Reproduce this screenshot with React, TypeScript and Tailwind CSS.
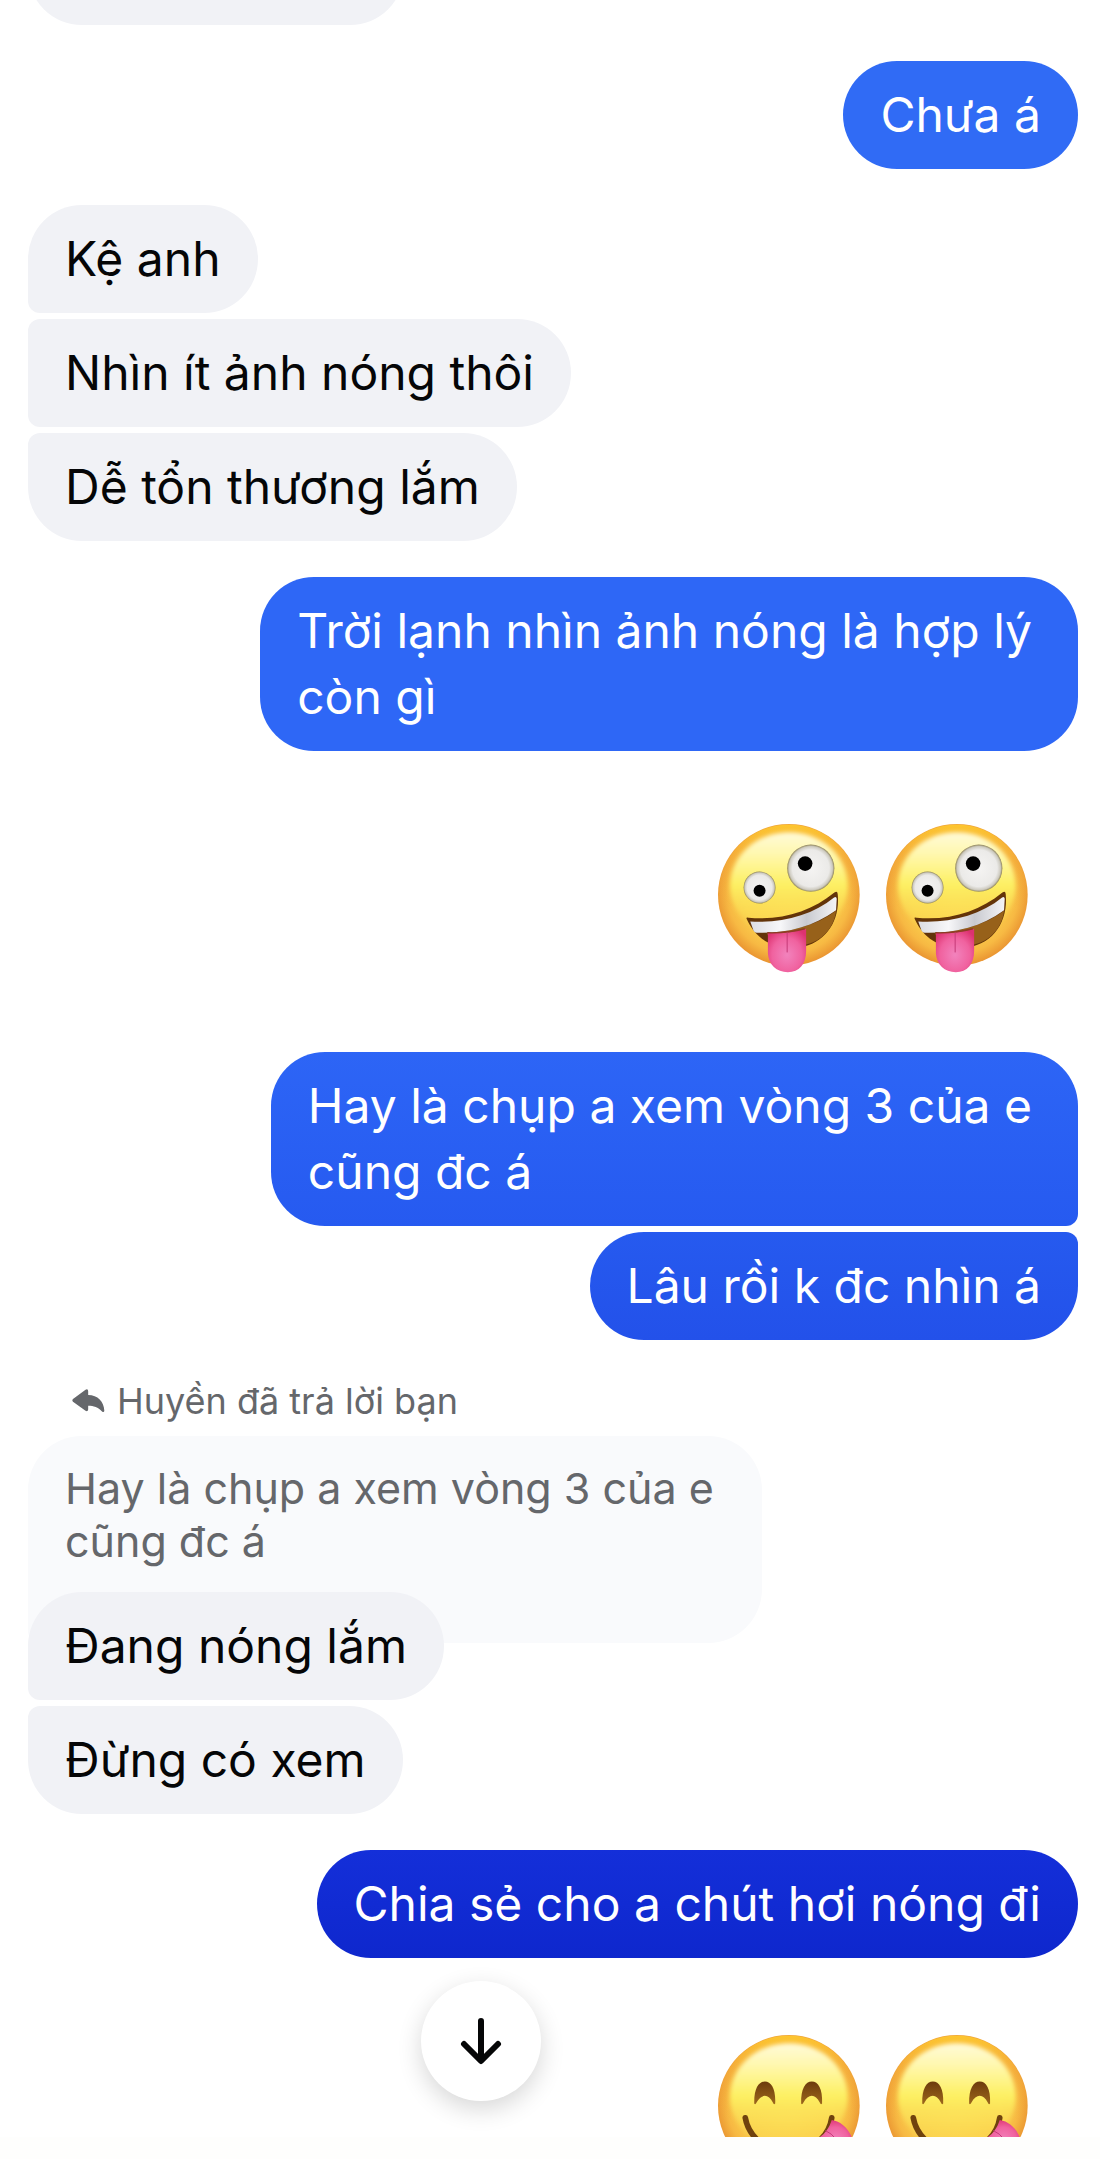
import { clsx } from 'clsx';
import type { ReactNode } from 'react';

interface Message {
    lines: string[];
    tone?: string;
    shape?: 'single' | 'first' | 'middle' | 'last';
}

interface BubbleProps {
    message: Message;
    mine?: boolean;
}

const THEIR_SHAPES = {
    single: 'rounded-[54px]',
    first: 'rounded-[54px] rounded-bl-xl',
    middle: 'rounded-[54px] rounded-l-xl',
    last: 'rounded-[54px] rounded-tl-xl',
};

const MY_SHAPES = {
    single: 'rounded-[54px]',
    first: 'rounded-[54px] rounded-br-xl',
    middle: 'rounded-[54px] rounded-r-xl',
    last: 'rounded-[54px] rounded-tr-xl',
};

function Bubble({ message, mine = false }: BubbleProps) {
    const { lines, tone, shape = 'single' } = message;

    return (
        <p
            className={clsx(
                'relative py-[21px] pl-[37px] text-[48px] leading-[66px]',
                lines.length > 1 ? 'pr-[46px]' : 'pr-[37px]',
                mine ? clsx('text-white', tone, MY_SHAPES[shape]) : clsx('bg-[#f1f2f6] text-[#050607]', THEIR_SHAPES[shape])
            )}
        >
            {lines.map((line) => (
                <span key={line} className="block">{line}</span>
            ))}
        </p>
    );
}

function Group({ mine = false, children }: { mine?: boolean; children: ReactNode }) {
    return (
        <div className={clsx('flex flex-col gap-[6px]', mine ? 'items-end' : 'items-start')}>
            {children}
        </div>
    );
}

// Shared gradients for both emoji faces
function EmojiDefs() {
    return (
        <svg className="absolute size-0" aria-hidden="true">
            <defs>
                <radialGradient id="face" cx="0.5" cy="0.48" r="0.53">
                    <stop offset="0" stopColor="#fddf58" />
                    <stop offset="0.6" stopColor="#fbd04d" />
                    <stop offset="0.82" stopColor="#f7b943" />
                    <stop offset="1" stopColor="#e8902f" />
                </radialGradient>
                <linearGradient id="shine" x1="0" y1="0" x2="0" y2="1">
                    <stop offset="0" stopColor="#fffad8" />
                    <stop offset="0.2" stopColor="#fff8b0" />
                    <stop offset="0.5" stopColor="#fdf062" />
                    <stop offset="0.75" stopColor="#fce057" stopOpacity="0.6" />
                    <stop offset="1" stopColor="#fbd24e" stopOpacity="0" />
                </linearGradient>
                <linearGradient id="rim" x1="0" y1="0" x2="0" y2="1">
                    <stop offset="0" stopColor="#fdc62e" />
                    <stop offset="0.25" stopColor="#f6b03a" stopOpacity="0.5" />
                    <stop offset="0.6" stopColor="#f0a038" stopOpacity="0" />
                </linearGradient>
                <radialGradient id="eyeball">
                    <stop offset="0" stopColor="#f5f4f3" />
                    <stop offset="0.78" stopColor="#ebeae8" />
                    <stop offset="0.92" stopColor="#cdcac0" />
                    <stop offset="1" stopColor="#8f8458" />
                </radialGradient>
                <linearGradient id="teeth" x1="0" y1="0" x2="1" y2="0">
                    <stop offset="0" stopColor="#dcdde2" />
                    <stop offset="0.35" stopColor="#f7f7f9" />
                    <stop offset="0.65" stopColor="#c9cad0" />
                    <stop offset="1" stopColor="#f4f4f6" />
                </linearGradient>
                <radialGradient id="tongue" cx="0.5" cy="0.6" r="0.65">
                    <stop offset="0" stopColor="#f283bd" />
                    <stop offset="0.6" stopColor="#f0629f" />
                    <stop offset="1" stopColor="#dd3270" />
                </radialGradient>
                <linearGradient id="brown" x1="0" y1="0" x2="0" y2="1">
                    <stop offset="0" stopColor="#6d3b0c" />
                    <stop offset="1" stopColor="#9c671c" />
                </linearGradient>
                <filter id="soften" x="-0.1" y="-0.1" width="1.2" height="1.2">
                    <feGaussianBlur stdDeviation="7" />
                </filter>
            </defs>
        </svg>
    );
}

function ZanyFace() {
    return (
        <svg viewBox="24 27 427 459" className="w-[142px]" role="img" aria-label="zany face">
            <circle cx="237" cy="240" r="213" fill="url(#face)" />
            <circle cx="237" cy="240" r="211" fill="url(#rim)" />
            <path d="M237 52C332 52 414 120 414 216C414 300 330 370 237 370S60 300 60 216C60 120 142 52 237 52Z" fill="url(#shine)" filter="url(#soften)" />
            <circle cx="149" cy="218" r="48" fill="url(#eyeball)" />
            <circle cx="149" cy="228" r="18" />
            <circle cx="303" cy="160" r="71" fill="url(#eyeball)" />
            <circle cx="286" cy="146" r="22" />
            <path d="M110 312Q108 306 116 309C216 318 304 290 374 233Q384 226 384 238C392 318 348 386 270 398C194 405 140 378 110 312Z" fill="#633409" />
            <path d="M170 356C244 350 322 332 379 288C372 344 330 388 270 392C228 394 192 382 170 356Z" fill="#97611a" />
            <path d="M121 320C212 326 308 302 373 248Q380 244 381 252L379 286C308 338 226 356 140 354Q134 354 131 348Z" fill="url(#teeth)" />
            <path d="M174 354Q232 358 289 342V410C289 448 268 473 234 473S176 450 174 416Z" fill="url(#tongue)" />
            <path d="M172 354Q232 356 285 342" fill="none" stroke="#8e3b25" strokeWidth="4" />
            <path d="M232 354V412" stroke="#c53a77" strokeWidth="3" strokeLinecap="round" />
        </svg>
    );
}

function YumFace() {
    return (
        <svg viewBox="24 32 427 459" className="w-[142px]" role="img" aria-label="face savoring food">
            <circle cx="237" cy="257" r="213" fill="url(#face)" />
            <circle cx="237" cy="257" r="211" fill="url(#rim)" />
            <path d="M237 69C332 69 414 137 414 233C414 317 330 387 237 387S60 317 60 233C60 137 142 69 237 69Z" fill="url(#shine)" filter="url(#soften)" />
            <path d="M133 250C132 206 146 184 165 184S198 206 196 250Q192 255 189 247C182 234 174 227 165 227S147 234 140 247Q136 255 133 250Z" fill="url(#brown)" />
            <path d="M274 250C273 206 287 184 306 184S339 206 337 250Q333 255 330 247C323 234 315 227 306 227S288 234 281 247Q277 255 274 250Z" fill="url(#brown)" />
            <path d="M106 293C116 350 172 398 237 398S358 350 366 293" fill="none" stroke="#70420e" strokeWidth="17" strokeLinecap="round" />
            <path d="M366 300C392 304 412 322 424 346C434 384 414 404 390 400C364 396 340 376 328 352C346 342 358 324 366 300Z" fill="url(#tongue)" />
            <path d="M348 332Q366 340 378 356" fill="none" stroke="#c53a77" strokeWidth="3" strokeLinecap="round" />
        </svg>
    );
}

function EmojiRow({ children }: { children: ReactNode }) {
    return <div className="flex justify-end gap-[26px] pt-[37px] pr-[50px] pb-[39px]">{children}</div>;
}

function ReplyLabel({ children }: { children: ReactNode }) {
    return (
        <p className="mb-2 flex items-center gap-3 pt-1 pl-11 text-[36px] leading-[42px] text-[#65676b]">
            <svg viewBox="64 56 100 70" className="w-[33px]" fill="currentColor" aria-hidden="true">
                <path d="M67 86L105 58Q113 54 113 63V74C142 74 161 94 162 122Q161 128 155 124C143 112 130 107 113 107V118Q112 126 105 122L67 95Q63 90 67 86Z" />
            </svg>
            {children}
        </p>
    );
}

function QuotedMessage({ lines }: { lines: string[] }) {
    return (
        <blockquote className="-mb-[57px] rounded-[54px] rounded-bl-xl bg-[#f9fafc] pt-[26px] pr-12 pb-[75px] pl-[37px] text-[43px] leading-[53px] text-[#65676b]">
            {lines.map((line) => (
                <span key={line} className="block">{line}</span>
            ))}
        </blockquote>
    );
}

export default function App() {
    return (
        <main className="flex h-screen flex-col bg-white font-['Inter','Noto_Sans',sans-serif]">
            <EmojiDefs />

            <section className="relative min-h-0 flex-1 overflow-hidden">
                <div className="flex flex-col gap-9 pr-[22px] pl-7">
                    {/* Older message, mostly scrolled out of view */}
                    <div className="-mt-[83px] h-[108px] w-[376px] rounded-[54px] bg-[#f1f2f6]" />

                    <Group mine>
                        <Bubble mine message={{ lines: ['Chưa á'], tone: 'bg-[#306bf5]' }} />
                    </Group>

                    <Group>
                        <Bubble message={{ lines: ['Kệ anh'], shape: 'first' }} />
                        <Bubble message={{ lines: ['Nhìn ít ảnh nóng thôi'], shape: 'middle' }} />
                        <Bubble message={{ lines: ['Dễ tổn thương lắm'], shape: 'last' }} />
                    </Group>

                    <Group mine>
                        <Bubble mine message={{ lines: ['Trời lạnh nhìn ảnh nóng là hợp lý', 'còn gì'], tone: 'bg-[#2e67f6]' }} />
                    </Group>

                    <EmojiRow>
                        <ZanyFace />
                        <ZanyFace />
                    </EmojiRow>

                    <Group mine>
                        <Bubble
                            mine
                            message={{
                                lines: ['Hay là chụp a xem vòng 3 của e', 'cũng đc á'],
                                tone: 'bg-linear-to-b from-[#2d65f6] to-[#265af0]',
                                shape: 'first',
                            }}
                        />
                        <Bubble
                            mine
                            message={{
                                lines: ['Lâu rồi k đc nhìn á'],
                                tone: 'bg-linear-to-b from-[#265aef] to-[#2351ea]',
                                shape: 'last',
                            }}
                        />
                    </Group>

                    <Group>
                        <ReplyLabel>Huyền đã trả lời bạn</ReplyLabel>
                        <QuotedMessage lines={['Hay là chụp a xem vòng 3 của e', 'cũng đc á']} />
                        <Bubble message={{ lines: ['Đang nóng lắm'], shape: 'first' }} />
                        <Bubble message={{ lines: ['Đừng có xem'], shape: 'last' }} />
                    </Group>

                    <Group mine>
                        <Bubble
                            mine
                            message={{
                                lines: ['Chia sẻ cho a chút hơi nóng đi'],
                                tone: 'bg-linear-to-b from-[#142fd9] to-[#0e27cd]',
                            }}
                        />
                    </Group>

                    <EmojiRow>
                        <YumFace />
                        <YumFace />
                    </EmojiRow>
                </div>

                <button
                    type="button"
                    aria-label="Cuộn xuống cuối"
                    className="absolute bottom-9 left-[421px] flex size-[120px] items-center justify-center rounded-full bg-white text-[#050607] shadow-[0_8px_24px_rgba(0,0,0,0.16)]"
                >
                    <svg viewBox="0 0 42 48" className="h-12" fill="none" stroke="currentColor" strokeWidth="6" strokeLinecap="round" strokeLinejoin="round" aria-hidden="true">
                        <path d="M21 4V43M4 27L21 44L38 27" />
                    </svg>
                </button>
            </section>

            <footer className="h-[22px] shrink-0 bg-[#fefefd]" />
        </main>
    );
}
